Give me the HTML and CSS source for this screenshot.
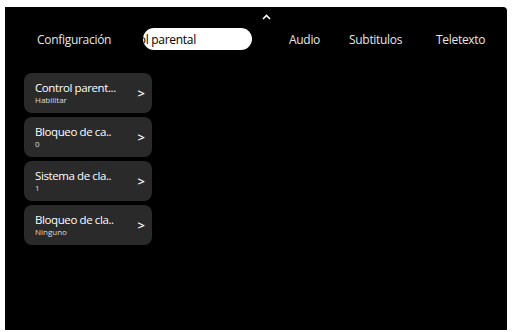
FILE: index.html
```html
<!DOCTYPE html>
<html>
<head>
<meta charset="utf-8">
<link rel="stylesheet" href="styles.css">
</head>
<body>
<div class="screen">
  <div class="caret">
    <svg width="9" height="6" viewBox="0 0 9 6"><path d="M1 5 L4.5 1.5 L8 5" fill="none" stroke="#fff" stroke-width="1.6"/></svg>
  </div>
  <div class="tabs">
    <div class="tab t1">Configuración</div>
    <div class="tab t2"><div class="pill"><span class="pill-text">Control parental</span></div></div>
    <div class="tab t3">Audio</div>
    <div class="tab t4">Subtitulos</div>
    <div class="tab t5">Teletexto</div>
  </div>
  <div class="list">
    <div class="card"><div class="txt"><div class="title">Control parent...</div><div class="sub">Habilitar</div></div><div class="chev">&gt;</div></div>
    <div class="card"><div class="txt"><div class="title">Bloqueo de ca..</div><div class="sub">0</div></div><div class="chev">&gt;</div></div>
    <div class="card"><div class="txt"><div class="title">Sistema de cla..</div><div class="sub">1</div></div><div class="chev">&gt;</div></div>
    <div class="card"><div class="txt"><div class="title">Bloqueo de cla..</div><div class="sub">Ninguno</div></div><div class="chev">&gt;</div></div>
  </div>
</div>
</body>
</html>
```
FILE: styles.css
```css
html, body {
  margin: 0;
  padding: 0;
  background: #ffffff;
}
body {
  width: 512px;
  height: 332px;
  padding: 7px 5px 2px 5px;
  box-sizing: border-box;
  font-family: "Open Sans", "DejaVu Sans", sans-serif;
}
.screen {
  width: 502px;
  height: 323px;
  background: #000;
  border-top-right-radius: 4px;
  display: flex;
  flex-direction: column;
}
.caret {
  display: flex;
  justify-content: center;
  padding-top: 7px;
  padding-left: 20px;
  height: 6px;
}
.tabs {
  display: flex;
  align-items: center;
  padding-left: 32px;
  margin-top: 8px;
  height: 22px;
  color: #e6e6e6;
  font-size: 12px;
  letter-spacing: -0.3px;
}
.t1 { width: 106px; }
.t2 { width: 146px; }
.t3 { width: 60px; }
.t4 { width: 87px; }
.pill {
  width: 109px;
  height: 22px;
  border-radius: 11px;
  background: #fff;
  color: #000;
  overflow: hidden;
  white-space: nowrap;
  display: flex;
  align-items: center;
}
.pill-text {
  margin-left: -34px;
}
.list {
  display: flex;
  flex-direction: column;
  gap: 4px;
  padding-left: 19px;
  margin-top: 23px;
}
.card {
  width: 128px;
  height: 40px;
  box-sizing: border-box;
  background: #2a2a2a;
  border-radius: 8px;
  display: flex;
  align-items: center;
  justify-content: space-between;
  padding: 0 7px 0 11px;
  color: #fff;
}
.txt {
  display: flex;
  flex-direction: column;
}
.title {
  font-size: 11.5px;
  letter-spacing: -0.4px;
  line-height: 14px;
}
.sub {
  font-size: 8px;
  line-height: 10px;
  color: #ddd;
}
.chev {
  font-size: 13px;
  font-weight: 600;
}
```
